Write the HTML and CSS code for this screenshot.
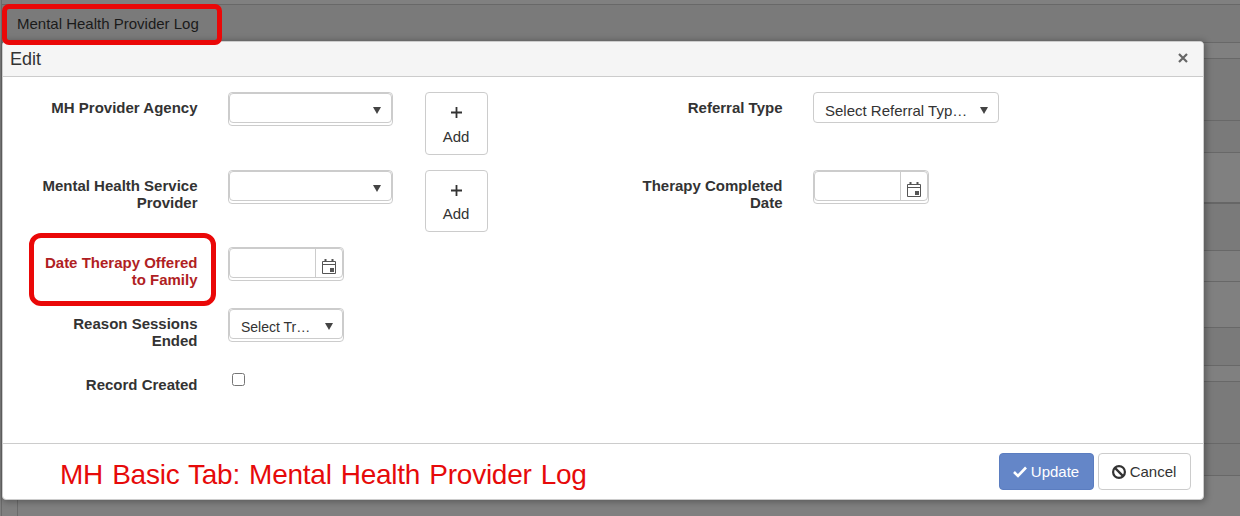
FILE: index.html
```html
<!DOCTYPE html>
<html lang="en">
	<head>
		<meta charset="UTF-8" />
		<meta name="viewport" content="width=device-width, initial-scale=1.0" />
		<title>Mental Health Provider Log</title>
		<link rel="stylesheet" href="styles.css">
	</head>
	<body>
		<div class="page">
			<div class="row top"></div>
			<div class="row dark heading"><span class="page_title">Mental Health Provider Log</span></div>
			<div class="row gap"></div>
			<div class="row dark tall"></div>
			<div class="row dark short"></div>
			<div class="row thick"></div>
			<div class="row dark mid"></div>
			<div class="row pager"></div>
			<div class="row body"></div>
			<div class="row dark footer"></div>
			<div class="row gap"></div>
			<div class="row dark tall"></div>
			<div class="row dark short"></div>
			<div class="row last"></div>
		</div>

		<div class="dialog">
			<header class="titlebar">
				<span class="dialog_title">Edit</span>
				<svg class="close" viewBox="0 0 10 10"><path d="M1 1l8 8M9 1l-8 8" /></svg>
			</header>

			<form class="fields">
				<div class="column">
					<div class="field agency">
						<label>MH Provider Agency</label>
						<div class="wrap wide"><div class="control"><i class="arrow"></i></div></div>
						<button type="button" class="add">
							<svg viewBox="0 0 11 11"><path d="M5.5 0v11M0 5.5h11" /></svg>
							<span>Add</span>
						</button>
					</div>
					<div class="field provider">
						<label>Mental Health Service Provider</label>
						<div class="wrap wide"><div class="control"><i class="arrow"></i></div></div>
						<button type="button" class="add">
							<svg viewBox="0 0 11 11"><path d="M5.5 0v11M0 5.5h11" /></svg>
							<span>Add</span>
						</button>
					</div>
					<div class="field offered">
						<label class="required">Date Therapy Offered to Family</label>
						<div class="wrap"><div class="control date">
							<span class="picker"><svg viewBox="0 0 14 15"><path class="line" d="M.5 2.5h13v12H.5zM.5 5.5h13" /><path class="solid" d="M2.5 0h2v3h-2zM9.5 0h2v3h-2zM8 9h4v4H8z" /></svg></span>
						</div></div>
					</div>
					<div class="field reason">
						<label>Reason Sessions Ended</label>
						<div class="wrap"><div class="control"><span class="value">Select Tr…</span><i class="arrow"></i></div></div>
					</div>
					<div class="field">
						<label>Record Created</label>
						<input type="checkbox" class="check" />
					</div>
				</div>

				<div class="column">
					<div class="field agency">
						<label>Referral Type</label>
						<div class="control single"><span class="value">Select Referral Typ…</span><i class="arrow"></i></div>
					</div>
					<div class="field">
						<label>Therapy Completed Date</label>
						<div class="wrap"><div class="control date">
							<span class="picker"><svg viewBox="0 0 14 15"><path class="line" d="M.5 2.5h13v12H.5zM.5 5.5h13" /><path class="solid" d="M2.5 0h2v3h-2zM9.5 0h2v3h-2zM8 9h4v4H8z" /></svg></span>
						</div></div>
					</div>
				</div>
			</form>

			<footer class="actions">
				<span class="note">MH Basic Tab: Mental Health Provider Log</span>
				<button type="button" class="btn primary">
					<svg class="tick" viewBox="0 0 14 12"><path d="M1 6l4 4 8-8.5" /></svg>
					<span>Update</span>
				</button>
				<button type="button" class="btn">
					<svg class="ban" viewBox="0 0 14 14"><circle cx="7" cy="7" r="5.9" /><path d="M2.9 2.9l8.2 8.2" /></svg>
					<span>Cancel</span>
				</button>
			</footer>
		</div>

		<!-- highlights -->
		<div class="mark mark_title"></div>
		<div class="mark mark_field"></div>
	</body>
</html>
```

FILE: styles.css
```css
* {
	box-sizing: border-box;
}

body {
	position: relative;
	margin: 0;
	height: 516px;
	overflow: hidden;
	background: #808080;
	color: #333;
	font-family: 'Liberation Sans', Arial, sans-serif;
	font-size: 15px;
}

/* dimmed page behind the dialog */
.page {
	height: 516px;
	margin-left: 1px;
	border-left: 1px solid #6b6b6b;
}

.row {
	border-bottom: 1px solid #686868;
}

.row.dark {
	background: #7a7a7a;
}

.row.top {
	height: 5px;
}

.row.heading {
	height: 38px;
	padding: 10px 0 0 15px;
}

.row.gap {
	height: 16px;
}

.row.tall {
	height: 62px;
}

.row.short {
	height: 32px;
}

.row.thick {
	height: 51px;
	border-bottom: 2px solid #666;
}

.row.mid {
	height: 47px;
}

.row.pager {
	height: 31px;
}

.row.body {
	height: 46px;
}

.row.footer {
	height: 38px;
}

.row.last {
	width: 16px;
	height: 40px;
	border-bottom: 0;
	border-right: 1px solid #6b6b6b;
}

.page_title {
	display: block;
	color: #1a1a1a;
	line-height: 18px;
}

.dialog {
	position: absolute;
	top: 41px;
	left: 2px;
	display: flex;
	flex-direction: column;
	width: 1202px;
	height: 459px;
	border: 1px solid #ccc;
	border-radius: 4px;
	background: #fff;
	box-shadow: 1px 1px 7px 1px rgba(0, 0, 0, 0.3);
}

.titlebar {
	display: flex;
	align-items: center;
	justify-content: space-between;
	height: 35px;
	padding: 0 15px 0 7px;
	border-bottom: 1px solid #ccc;
	border-radius: 3px 3px 0 0;
	background: #f5f5f5;
}

.dialog_title {
	font-size: 18px;
}

.close {
	width: 10px;
	height: 10px;
	margin-bottom: 3px;
	fill: none;
	stroke: #666;
	stroke-width: 2.2;
}

.fields {
	display: flex;
	flex: 1;
	padding-top: 15px;
}

.column {
	width: 585px;
}

.field {
	display: flex;
	align-items: flex-start;
	height: 61px;
}

.field.agency {
	height: 78px;
}

.field.provider {
	height: 77px;
}

label {
	width: 194.5px;
	padding: 7px 0 0 35px;
	margin-right: 30.5px;
	font-size: 15px;
	font-weight: bold;
	line-height: 17px;
	text-align: right;
}

.required {
	color: #b01e23;
}

.wrap {
	width: 116px;
	height: 34px;
	border: 1px solid #ccc;
	border-radius: 4px;
}

.wrap.wide {
	width: 165px;
}

.control {
	display: flex;
	align-items: center;
	justify-content: space-between;
	height: 30px;
	padding: 5px 9px 0 11px;
	border: 1px solid #ccc;
	border-radius: 4px;
}

.wide .control {
	padding-right: 10px;
}

.control.single {
	width: 186px;
	height: 31px;
	padding-top: 6px;
	padding-right: 10px;
}

.control.date {
	justify-content: flex-end;
	padding: 0;
}

.value {
	line-height: 18px;
}

.reason .value {
	font-size: 14px;
}

.arrow {
	margin-left: auto;
	border: 4.5px solid transparent;
	border-top: 7px solid #444;
	border-bottom: 0;
}

.picker {
	display: flex;
	justify-content: center;
	width: 27px;
	height: 28px;
	padding-top: 10px;
	border-left: 1px solid #ccc;
}

.picker svg {
	width: 14px;
	height: 15px;
}

.line {
	fill: none;
	stroke: #555;
}

.solid {
	fill: #555;
}

.add {
	display: flex;
	flex-direction: column;
	align-items: center;
	width: 63px;
	height: 63px;
	margin-left: 32px;
	padding: 14px 1px 0 0;
	border: 1px solid #ccc;
	border-radius: 4px;
	background: #fff;
	color: #333;
	font: inherit;
}

.add svg {
	width: 11px;
	height: 11px;
	margin-bottom: 10px;
	fill: none;
	stroke: #333;
	stroke-width: 1.8;
}

.provider .add {
	height: 62px;
}

.provider .add svg {
	margin-bottom: 9px;
}

.check {
	width: 13px;
	height: 13px;
	margin: 4px;
}

.actions {
	display: flex;
	align-items: flex-start;
	gap: 4px;
	height: 56px;
	padding: 9px 12px 0 57px;
	border-top: 1px solid #ccc;
}

.note {
	flex: 1;
	padding-top: 6px;
	color: #e60a0a;
	font-size: 28px;
	letter-spacing: -0.25px;
	line-height: 32px;
	word-spacing: 1.6px;
}

.btn {
	display: flex;
	align-items: center;
	justify-content: center;
	gap: 4px;
	width: 93px;
	height: 37px;
	padding: 0 1px 0 0;
	border: 1px solid #ccc;
	border-radius: 4px;
	background: #fff;
	color: #333;
	font: inherit;
}

.btn svg {
	fill: none;
	stroke: currentColor;
}

.btn.primary {
	width: 95px;
	border-color: #5b7dc0;
	background: #6486c8;
	color: #fff;
}

.tick {
	width: 14px;
	height: 12px;
	stroke-width: 2.6;
}

.ban {
	width: 14px;
	height: 14px;
	stroke-width: 2.2;
}

.mark {
	position: absolute;
	border: 5px solid #ea0808;
}

.mark_title {
	top: 4px;
	left: 2px;
	width: 220px;
	height: 41px;
	border-radius: 7px;
}

.mark_field {
	top: 233px;
	left: 29px;
	width: 187px;
	height: 73px;
	border-radius: 12px;
}
```
